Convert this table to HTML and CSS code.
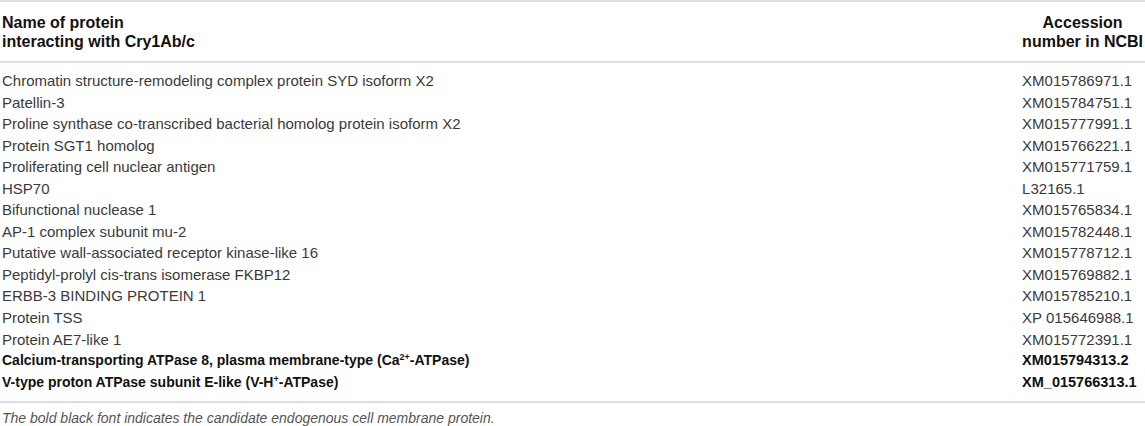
FILE: index.html
```html
<!DOCTYPE html>
<html>
<head>
<meta charset="utf-8">
<link rel="stylesheet" href="styles.css">
</head>
<body>
<div class="wrap">
<table class="tbl">
<thead>
<tr>
<th class="c-name">Name of protein<br>interacting with Cry1Ab/c</th>
<th class="c-acc">Accession<br>number in NCBI</th>
</tr>
</thead>
<tbody>
<tr class="first"><td>Chromatin structure-remodeling complex protein SYD isoform X2</td><td class="acc">XM015786971.1</td></tr>
<tr><td>Patellin-3</td><td class="acc">XM015784751.1</td></tr>
<tr><td>Proline synthase co-transcribed bacterial homolog protein isoform X2</td><td class="acc">XM015777991.1</td></tr>
<tr><td>Protein SGT1 homolog</td><td class="acc">XM015766221.1</td></tr>
<tr><td>Proliferating cell nuclear antigen</td><td class="acc">XM015771759.1</td></tr>
<tr><td>HSP70</td><td class="acc">L32165.1</td></tr>
<tr><td>Bifunctional nuclease 1</td><td class="acc">XM015765834.1</td></tr>
<tr><td>AP-1 complex subunit mu-2</td><td class="acc">XM015782448.1</td></tr>
<tr><td>Putative wall-associated receptor kinase-like 16</td><td class="acc">XM015778712.1</td></tr>
<tr><td>Peptidyl-prolyl cis-trans isomerase FKBP12</td><td class="acc">XM015769882.1</td></tr>
<tr><td>ERBB-3 BINDING PROTEIN 1</td><td class="acc">XM015785210.1</td></tr>
<tr><td>Protein TSS</td><td class="acc">XP 015646988.1</td></tr>
<tr><td>Protein AE7-like 1</td><td class="acc">XM015772391.1</td></tr>
<tr class="bold"><td>Calcium-transporting ATPase 8, plasma membrane-type (Ca<sup>2+</sup>-ATPase)</td><td class="acc">XM015794313.2</td></tr>
<tr class="bold last"><td>V-type proton ATPase subunit E-like (V-H<sup>+</sup>-ATPase)</td><td class="acc">XM_015766313.1</td></tr>
</tbody>
</table>
<p class="note">The bold black font indicates the candidate endogenous cell membrane protein.</p>
</div>
</body>
</html>
```
FILE: styles.css
```css
html, body {
  margin: 0;
  padding: 0;
  background: #ffffff;
}
body {
  font-family: "Liberation Sans", Arial, Helvetica, sans-serif;
  color: #3a3a3a;
}
.wrap {
  width: 1145px;
}
.tbl {
  width: 100%;
  border-collapse: collapse;
  border-top: 2px solid #dedede;
  border-bottom: 2px solid #dedede;
  font-size: 15px;
}
.tbl th {
  font-size: 16px;
  font-weight: bold;
  color: #111111;
  line-height: 19px;
  padding: 11px 2px 10px 2px;
  border-bottom: 2px solid #dedede;
  vertical-align: bottom;
}
.c-name {
  text-align: left;
}
.c-acc {
  text-align: center;
  width: 1px;
  white-space: nowrap;
}
.tbl td {
  padding: 0 2px;
  line-height: 21.55px;
  white-space: nowrap;
}
.tbl tr.first td {
  padding-top: 7px;
}
.tbl tr.last td {
  padding-bottom: 8px;
}
.tbl tr.bold td {
  font-size: 14px;
  font-weight: bold;
  color: #111111;
}
.tbl tr.bold td.acc {
  font-size: 14.5px;
}
.acc {
  text-align: left;
}
sup {
  font-size: 9px;
  line-height: 0;
  vertical-align: 5px;
}
.note {
  margin: 0;
  padding: 7px 2px 0 2px;
  font-size: 14px;
  font-style: italic;
  color: #555555;
  line-height: 16px;
}
```
